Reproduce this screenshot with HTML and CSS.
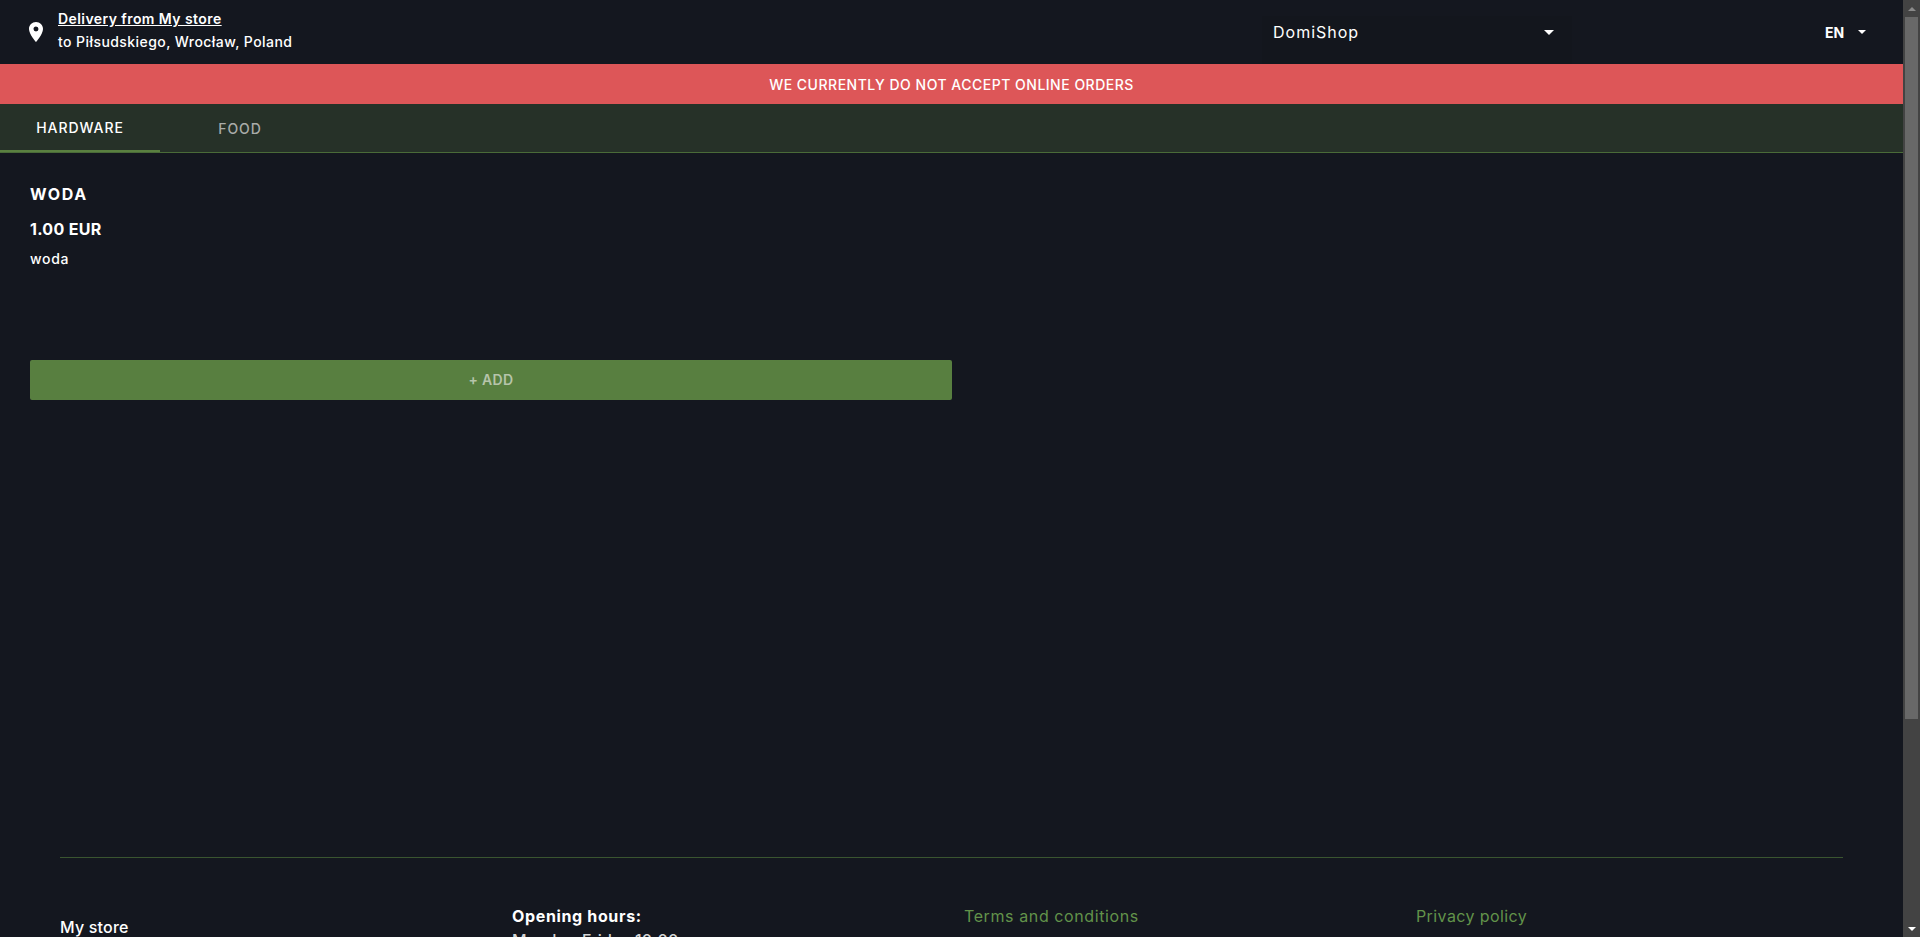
FILE: index.html
```html
<!DOCTYPE html>
<html lang="en">
<head>
<meta charset="utf-8">
<title>DomiShop</title>
<link rel="stylesheet" href="styles.css">
</head>
<body>
<div class="page">
  <header class="topbar">
    <div class="delivery">
      <svg class="pin" viewBox="0 0 24 24" aria-hidden="true"><path fill-rule="evenodd" d="M12 2C8.130 2 5 5.130 5 9c0 5.250 7 13 7 13s7-7.750 7-13c0-3.870-3.130-7-7-7zm0 9.500a2.500 2.500 0 0 1 0-5 2.500 2.500 0 0 1 0 5z"/></svg>
      <div class="delivery-text">
        <a class="delivery-link" href="#">Delivery from My store</a>
        <span class="delivery-address">to Piłsudskiego, Wrocław, Poland</span>
      </div>
    </div>
    <div class="shop-select"><span class="shop-name">DomiShop</span><span class="caret"></span></div>
    <div class="lang-select"><span class="lang-name">EN</span><span class="caret caret-small"></span></div>
  </header>
  <div class="notice">WE CURRENTLY DO NOT ACCEPT ONLINE ORDERS</div>
  <nav class="tabs">
    <a class="tab tab-active" href="#">HARDWARE</a>
    <a class="tab" href="#">FOOD</a>
  </nav>
  <main class="products">
    <article class="product">
      <h2 class="product-title">WODA</h2>
      <p class="product-price">1.00 EUR</p>
      <p class="product-desc">woda</p>
      <button class="add-btn" type="button">+ ADD</button>
    </article>
  </main>
  <footer class="footer">
    <div class="footer-grid">
      <div class="footer-store">My store</div>
      <div class="footer-hours">
        <strong class="hours-title">Opening hours:</strong>
        <span class="hours-line">Monday-Friday 10:00</span>
      </div>
      <a class="footer-link footer-terms" href="#">Terms and conditions</a>
      <a class="footer-link footer-privacy" href="#">Privacy policy</a>
    </div>
  </footer>
</div>
<div class="scrollbar" aria-hidden="true">
  <div class="scroll-btn"><span class="arrow-up"></span></div>
  <div class="scroll-thumb"></div>
  <div class="scroll-rest"></div>
  <div class="scroll-btn"><span class="arrow-down"></span></div>
</div>
</body>
</html>
```
FILE: styles.css
```css
* { box-sizing: border-box; }
html { background: #14171f; }
body { display: flex; height: 100vh; margin: 0; overflow: hidden; background: #14171f; color: #fff; font-family: Inter, "Liberation Sans", sans-serif; font-size: 14px; }
a { color: inherit; }
.page { flex: 1; min-width: 0; height: 100vh; overflow: hidden; }
.scrollbar { display: flex; flex-direction: column; flex: none; width: 17px; height: 100vh; background: #434343; }
.scroll-btn { display: flex; align-items: center; justify-content: center; flex: none; height: 17px; }
.scroll-thumb { flex: none; height: 702px; margin: 0 2px; background: #686868; }
.scroll-rest { flex: 1; }
.arrow-up { width: 0; height: 0; border-left: 4px solid transparent; border-right: 4px solid transparent; border-bottom: 4px solid #8a8a8a; }
.arrow-down { width: 0; height: 0; border-left: 4px solid transparent; border-right: 4px solid transparent; border-top: 4px solid #fff; }
.topbar { display: flex; align-items: center; height: 64px; padding-left: 24px; }
.delivery { display: flex; align-items: center; gap: 10px; width: 1238px; }
.pin { width: 24px; height: 24px; fill: #fff; flex: none; }
.delivery-text { display: flex; flex-direction: column; gap: 5px; margin-top: -3px; font-size: 14px; line-height: 18px; font-weight: 500; letter-spacing: .43px; }
.delivery-link { font-weight: 600; }
.shop-select { display: flex; align-items: center; justify-content: space-between; align-self: flex-end; width: 310px; height: 48px; padding: 0 18px 16px 11px; background: #13161d; }
.shop-name { font-size: 16px; letter-spacing: 1px; }
.lang-select { display: flex; align-items: center; gap: 14px; margin-left: 253px; }
.lang-name { font-size: 14px; font-weight: 700; }
.caret { width: 0; height: 0; border-left: 5px solid transparent; border-right: 5px solid transparent; border-top: 5px solid #fff; }
.caret-small { border-left-width: 4px; border-right-width: 4px; border-top-width: 4px; }
.notice { display: flex; align-items: center; justify-content: center; height: 40px; background: #dd5658; font-size: 14px; font-weight: 500; letter-spacing: .5px; }
.tabs { display: flex; height: 49px; background: #263128; border-bottom: 1px solid #4a6b38; }
.tab { display: flex; align-items: center; justify-content: center; width: 160px; height: 48px; font-size: 14px; font-weight: 500; letter-spacing: .95px; text-decoration: none; color: #a9aca9; }
.tab-active { color: #fff; border-bottom: 2px solid #5a8040; }
.products { height: 704px; padding: 31px 30px 0; }
.product { width: 922px; }
.product-title { margin: 0; font-size: 16px; line-height: 20px; font-weight: 700; letter-spacing: 1.6px; }
.product-price { margin: 15px 0 0; font-size: 16px; line-height: 20px; font-weight: 700; letter-spacing: .3px; }
.product-desc { margin: 11px 0 0; font-size: 14px; line-height: 18px; font-weight: 500; letter-spacing: .7px; }
.add-btn { display: block; width: 100%; height: 40px; margin-top: 92px; padding: 0 0 2px; border: 0; border-radius: 2px; background: #587f40; color: #b6c4aa; font-family: inherit; font-size: 14px; font-weight: 600; letter-spacing: .3px; }
.footer { margin: 0 60px; border-top: 1px solid #3a5530; padding-top: 47px; height: 357px; }
.footer-grid { display: grid; grid-template-columns: 452px 452px 452px 1fr; font-size: 16px; line-height: 22px; }
.footer-store { padding-top: 11px; font-weight: 500; letter-spacing: .2px; }
.footer-hours { display: flex; flex-direction: column; gap: 2px; }
.hours-title { font-weight: 700; letter-spacing: .65px; }
.hours-line { color: #d5d5d5; font-weight: 500; letter-spacing: .2px; }
.footer-link { color: #62934a; text-decoration: none; }
.footer-terms { letter-spacing: .6px; }
.footer-privacy { letter-spacing: .4px; }
```
